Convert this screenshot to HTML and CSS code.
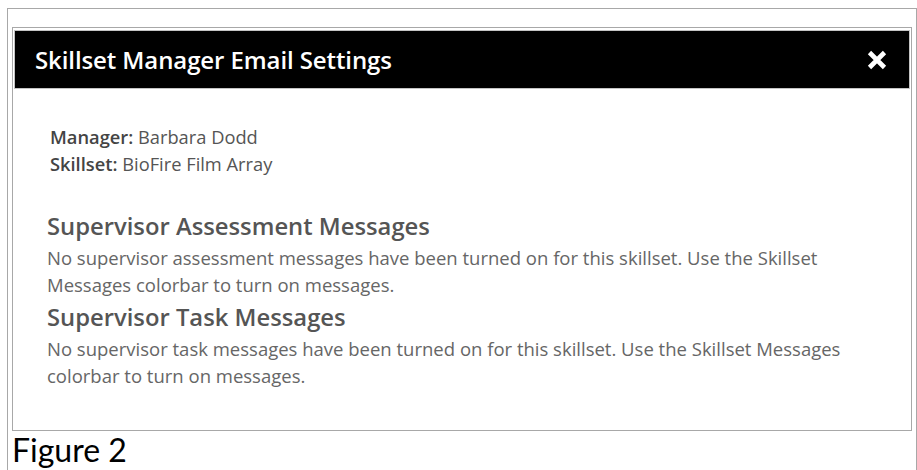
FILE: index.html
```html
<!DOCTYPE html>
<html lang="en">
<head>
<meta charset="utf-8">
<title>Skillset Manager Email Settings</title>
<link rel="stylesheet" href="styles.css">
</head>
<body>
<div class="figure">
  <div class="modal">
    <div class="modal-header">
      <h1 class="modal-title">Skillset Manager Email Settings</h1>
      <button class="modal-close" type="button" aria-label="Close">
        <svg viewBox="0 0 22 22" width="22" height="22" aria-hidden="true">
          <path d="M3.5 3.5 L18.5 18.5 M18.5 3.5 L3.5 18.5" stroke="#fff" stroke-width="4.6" fill="none"/>
        </svg>
      </button>
    </div>
    <div class="modal-body">
      <div class="meta">
        <div class="meta-row"><span class="meta-label">Manager:</span> Barbara Dodd</div>
        <div class="meta-row"><span class="meta-label">Skillset:</span> BioFire Film Array</div>
      </div>
      <h2 class="section-title">Supervisor Assessment Messages</h2>
      <p class="section-text">No supervisor assessment messages have been turned on for this skillset. Use the Skillset Messages colorbar to turn on messages.</p>
      <h2 class="section-title">Supervisor Task Messages</h2>
      <p class="section-text">No supervisor task messages have been turned on for this skillset. Use the Skillset Messages colorbar to turn on messages.</p>
    </div>
  </div>
  <div class="caption">Figure 2</div>
</div>
</body>
</html>
```

FILE: styles.css
```css
html, body {
  margin: 0;
  padding: 0;
  overflow: hidden;
  background: #fff;
}

.figure {
  margin: 8px 0 0 7px;
  width: 900px;
  padding: 18px 4px 10px 4px;
  border: 1px solid #a8a8a8;
  border-bottom: none;
}

.modal {
  border: 1px solid #a8a8a8;
  background: #fff;
}

.modal-header {
  margin: 2px 1px 0 1px;
  height: 57px;
  border: 1px solid #c4c4c4;
  background: #000;
  display: flex;
  align-items: center;
  justify-content: space-between;
  padding: 0 21px 0 20px;
}

.modal-title {
  margin: 0;
  font-family: "Open Sans", "Liberation Sans", sans-serif;
  font-weight: 600;
  font-size: 24px;
  line-height: 32px;
  color: #fff;
  letter-spacing: -0.1px;
}

.modal-close {
  display: flex;
  padding: 0;
  border: 0;
  background: transparent;
  cursor: pointer;
}

.modal-body {
  padding: 34px 40px 41px 34px;
  font-family: "Open Sans", "Liberation Sans", sans-serif;
}

.meta {
  padding-left: 3px;
  margin-bottom: 34px;
}

.meta-row {
  font-size: 18.3px;
  line-height: 27px;
  color: #555;
}

.meta-label {
  font-weight: 600;
  color: #444;
}

.section-title {
  margin: 0 0 3px 0;
  font-size: 23.8px;
  line-height: 30px;
  font-weight: 600;
  color: #555;
}

.section-text {
  margin: 0 0 4px 0;
  font-size: 18.5px;
  line-height: 27px;
  color: #666;
}

.section-text:last-child {
  margin-bottom: 0;
}

.caption {
  margin-top: 1px;
  font-family: Lato, "Open Sans", sans-serif;
  font-size: 32px;
  line-height: 36px;
  color: #000;
}
```
